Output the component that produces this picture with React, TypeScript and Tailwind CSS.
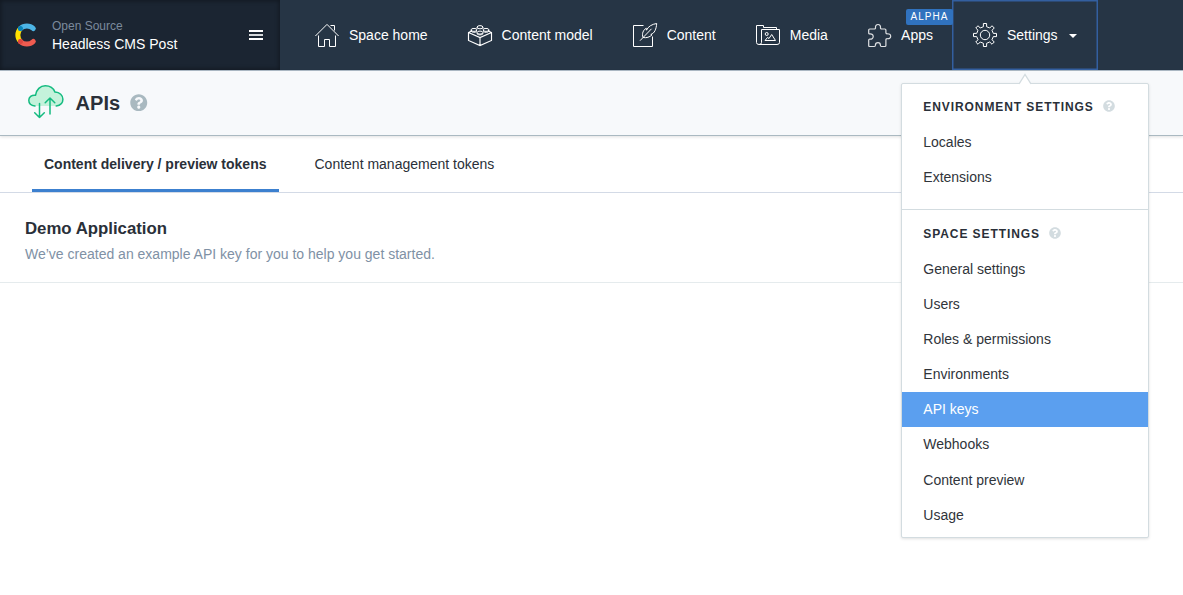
import React from "react";
import { FaQuestionCircle } from "react-icons/fa";

const gearPoints = Array.from({ length: 8 }, (_, i) => {
  const a = (i * Math.PI) / 4;
  return [[-1.6, -8.3], [-1.6, -11.5], [1.6, -11.5], [1.6, -8.3]]
    .map(([x, y]) => `${(12 + x * Math.cos(a) - y * Math.sin(a)).toFixed(2)},${(12 + x * Math.sin(a) + y * Math.cos(a)).toFixed(2)}`)
    .join(" ");
}).join(" ");

function Icon({ children }: { children: React.ReactNode }) {
  return (
    <svg width="24" height="24" viewBox="0 0 24 24" fill="none" stroke="#fff" strokeWidth="1" className="shrink-0 overflow-visible">
      {children}
    </svg>
  );
}

const HomeIcon = () => (
  <Icon>
    <path d="M.4 13 12 1.4 23.6 13" />
    <path d="M3.5 12.5v11h6v-7h5v7h6v-11M15.5 2.5h4v5" />
  </Icon>
);

const ModelIcon = () => (
  <Icon>
    <path d="M3.500 8 .5 9.500v8L12 22.600l11.500-5.100v-8L20.500 8M.5 9.500 12 14.500 23.500 9.500M12 14.500v8.100" strokeWidth="1.150" />
    <ellipse cx="12" cy="4.200" rx="2.900" ry="1.600" />
    <ellipse cx="6" cy="6.900" rx="2.900" ry="1.500" />
    <ellipse cx="18" cy="6.900" rx="2.900" ry="1.500" />
    <ellipse cx="12" cy="9.600" rx="2.900" ry="1.500" />
    <path d="M9.100 4.200v1.600M14.900 4.200v1.600M3.100 6.900v1.300c.8 1.300 4 1.600 5.800.3M20.900 6.900v1.300c-.8 1.300-4 1.600-5.800.3M9.100 9.600v1.300c1 1.300 4.800 1.300 5.800 0V9.600" />
  </Icon>
);

const ContentIcon = () => (
  <Icon>
    <path d="M10.500 2.500H.5v21h19v-10" />
    <path d="M7 17.700 18.500 5.800M10 14.500c-1.400-4 .3-7.500 3.200-9.300l.3 2C15 3.500 19 1.200 23.700.5c-.4 5.500-2.200 10-5.900 10.900l1.200.5c-2.300 2.200-5.500 3.300-9 2.600Z" />
  </Icon>
);

const MediaIcon = () => (
  <Icon>
    <path d="M20.500 6.500v-2h-13v-2h-7v17q0 2 2.500 2h18q2.500 0 2.500-2v-13h-18v13q0 2-2.500 2" />
    <circle cx="10.700" cy="11" r="1.500" />
    <path d="M9 17.500h10.500l-3.800-6-2.700 4-1.500-1L9 17.500Z" />
  </Icon>
);

const AppsIcon = () => (
  <Icon>
    <path transform="translate(.7 0)" d="M1 7Q1 6 2 6H6.500Q8 6 7.800 4.600C7.600 2.900 8.600 1.500 10.300 1.500S13 2.900 12.800 4.600Q12.600 6 14.100 6H17.200Q18.200 6 18.200 7V9.500Q18.200 10.900 19.500 10.800C21.500 10.600 23 11.500 23 13.200S21.500 15.900 19.500 15.700Q18.200 15.600 18.200 17V22.500Q18.200 23.500 17.200 23.500H13.700Q12.700 23.500 12.700 22.300C12.700 20.700 11.700 19.700 10.300 19.700S7.700 20.700 7.700 22.300Q7.700 23.500 6.700 23.500H2Q1 23.500 1 22.500V17.200Q1 16.100 2.200 16.200C4.400 16.300 5.500 15.100 5.500 13.500S4.400 10.800 2.200 10.900Q1 11 1 9.900Z" strokeWidth="1.200" strokeOpacity=".85" />
  </Icon>
);

const GearIcon = () => (
  <Icon>
    <polygon points={gearPoints} />
    <circle cx="12" cy="12" r="4.700" />
  </Icon>
);

function NavItem({ icon, label, badge }: { icon: React.ReactNode; label: string; badge?: string }) {
  return (
    <a className={`relative flex h-full items-center gap-[10px] px-5 ${badge ? "-ml-[0.800px]" : ""}`}>
      {icon}
      <span>{label}</span>
      {badge && (
        <span className="absolute right-0 top-[9px] flex h-4 w-[47px] items-center justify-center rounded-[2px] bg-[#3072be] text-[10px] tracking-[1px]">
          {badge}
        </span>
      )}
    </a>
  );
}

function MenuSection({ title, items, active, headClass }: { title: string; items: string[]; active?: string; headClass: string }) {
  return (
    <>
      <div className={`flex items-center pl-[21.300px] ${headClass}`}>
        <span className="text-[12px] font-bold tracking-[0.920px] text-[#2a3039]">{title}</span>
        <FaQuestionCircle className="-mt-[3px] ml-[9.500px] size-3 text-[#d3dce0]" />
      </div>
      {items.map((item) => (
        <div
          key={item}
          className={`flex h-[35.160px] items-center pl-[21.300px] ${item === active ? "bg-[#5b9fef] text-white" : "text-[#30343a]"}`}
        >
          {item}
        </div>
      ))}
    </>
  );
}

export default function App() {
  return (
    <div className="relative h-[595px] w-[1183px] overflow-hidden bg-white font-['Liberation_Sans',Arial,sans-serif] text-[14px] leading-5 text-[#2a3039]">
      <header className="flex h-[71px] border-b border-[#aebbc6] bg-[#263545] text-white">
        <div className="flex w-[280px] items-center bg-[#1b2532] pl-[15px] pr-4 shadow-[inset_0_0_4px_1px_rgba(0,0,0,0.35)]">
          <svg width="22" height="24" viewBox="0 0 22 24" fill="none" strokeWidth="5" strokeLinecap="round">
            <path d="M5.400 5.600A9.300 9.300 0 0 0 5.400 18.400" stroke="#ffe000" />
            <path d="M5.400 5.500A9.300 9.300 0 0 1 18.300 5.500" stroke="#4db5e6" />
            <path d="M5.400 18.500A9.300 9.300 0 0 0 18.300 18.500" stroke="#ef5b50" />
            <circle cx="5.400" cy="5.500" r="2.500" fill="#0882b7" />
            <circle cx="5.400" cy="18.500" r="2.500" fill="#dc4640" />
          </svg>
          <div className="ml-[15px] flex-1 pt-[2px]">
            <div className="text-[12px] leading-[17px] text-[#7b8a9d]">Open Source</div>
            <div className="leading-[19px]">Headless CMS Post</div>
          </div>
          <div className="mr-[1px] flex w-[14px] flex-col gap-[2px]">
            <i className="h-[2px] bg-white" />
            <i className="h-[2px] bg-[#d5d8db]" />
            <i className="h-[2px] bg-white" />
          </div>
        </div>
        <nav className="flex pl-[15px]">
          <NavItem icon={<HomeIcon />} label="Space home" />
          <NavItem icon={<ModelIcon />} label="Content model" />
          <NavItem icon={<ContentIcon />} label="Content" />
          <NavItem icon={<MediaIcon />} label="Media" />
          <NavItem icon={<AppsIcon />} label="Apps" badge="ALPHA" />
          <a className="-ml-[0.700px] flex w-[146px] items-center gap-[10px] border-[1.500px] border-[#335f9f] pl-[19.700px] shadow-[inset_0_0_0_0.500px_#335f9f]">
            <GearIcon />
            <span>Settings</span>
            <svg width="8" height="4" viewBox="0 0 8 4" className="ml-[1.500px] mt-[2px]">
              <path d="M0 0h8L4 4Z" fill="#fff" />
            </svg>
          </a>
        </nav>
      </header>

      <div className="flex h-[65px] items-center border-b border-[#aab9c1] bg-[#f7f9fb] pl-7 shadow-[0_1px_3px_rgba(0,0,0,0.12)]">
        <svg width="36" height="34" viewBox="0 0 36 34" fill="none" stroke="#14bb80" strokeWidth="1.500" strokeLinecap="round" strokeLinejoin="round" className="-mt-[2px]">
          <path d="M6 21C2.500 20.500.8 18 .8 15.300.8 12 3.500 9.900 7.500 10.300 8.300 4.500 12.300.8 17.300.8c4.600 0 8.200 2.500 9.700 6.300 4.700.2 7.900 3.200 7.900 7.200 0 3.500-2.400 6.200-6.700 6.700Z" fill="#c4f2db" stroke="none" />
          <path d="M7 21C2.500 20.700.8 18 .8 15.300.8 12 3.500 9.900 7.500 10.300 8.300 4.500 12.300.8 17.300.8c4.600 0 8.200 2.500 9.700 6.300 4.700.2 7.900 3.200 7.900 7.200 0 3.500-2.400 6.200-6.700 6.700" />
          <path d="M11.500 18.500v14M6.700 27.700l4.800 4.800 4.800-4.800M22 29V13M17.200 17.800 22 13l4.800 4.800" />
        </svg>
        <h1 className="ml-[11.600px] text-[20px] font-bold">APIs</h1>
        <FaQuestionCircle className="-mt-px ml-[10px] size-[17.500px] text-[#a9b9c0]" />
      </div>

      <div className="flex h-[57px] gap-6 border-b border-[#d3dae6] pl-8">
        <div className="flex w-[246.500px] items-center justify-center border-b-[3px] border-[#3c80cf] pt-[3px] font-bold">Content delivery / preview tokens</div>
        <div className="flex items-center px-3">Content management tokens</div>
      </div>

      <div className="h-[90px] border-b border-[#e5ebed] pl-[25px] pt-[26px]">
        <div className="text-[16.800px] font-bold">Demo Application</div>
        <div className="mt-[5px] text-[#8091a5]">We’ve created an example API key for you to help you get started.</div>
      </div>

      <div className="absolute left-[901px] top-[83px] h-[455px] w-[248px] rounded-[2px] border border-[#d3dce0] bg-white shadow-[0_1px_3px_rgba(0,0,0,0.12)]">
        <svg width="14" height="12" viewBox="0 0 14 12" className="absolute left-[116px] top-[-11px]">
          <path d="M1 11 7 1.500 13 11V12H1Z" fill="#fff" />
          <path d="M1 11 7 1.500 13 11" fill="none" stroke="#d3dce0" strokeWidth="1.400" />
        </svg>
        <div className="h-[126px] border-b border-[#d3dce0]">
          <MenuSection title="ENVIRONMENT SETTINGS" items={["Locales", "Extensions"]} headClass="h-10 pt-[6px]" />
        </div>
        <MenuSection
          title="SPACE SETTINGS"
          headClass="h-[41.080px] pt-[7px]"
          items={["General settings", "Users", "Roles & permissions", "Environments", "API keys", "Webhooks", "Content preview", "Usage"]}
          active="API keys"
        />
      </div>
    </div>
  );
}
